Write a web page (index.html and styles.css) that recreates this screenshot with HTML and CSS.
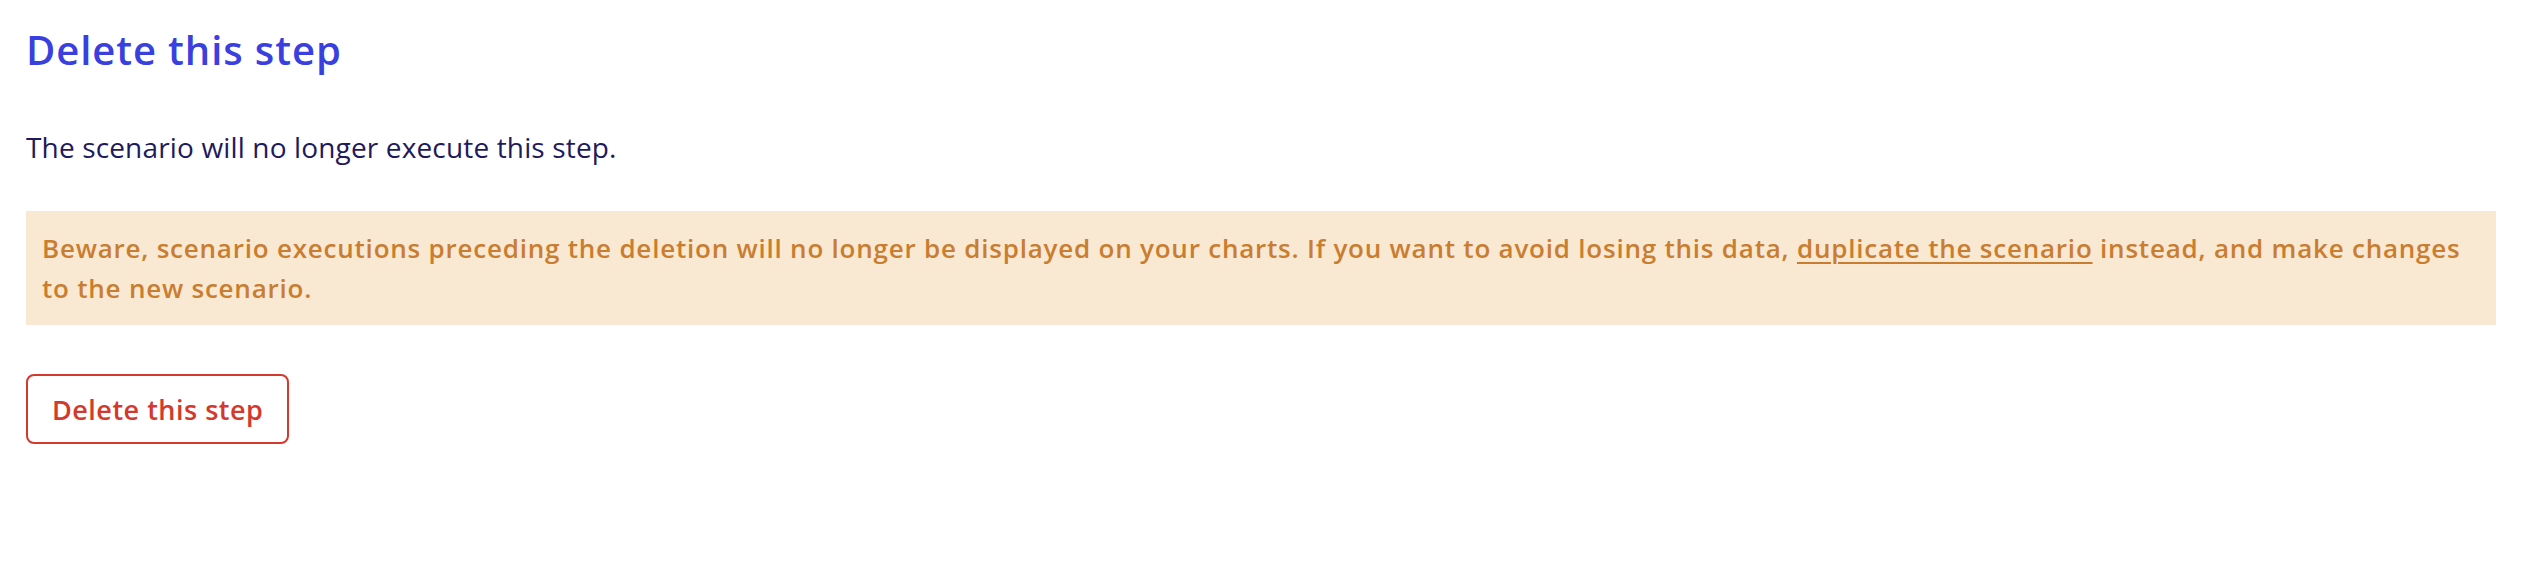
FILE: index.html
```html
<!DOCTYPE html>
<html lang="en">
<head>
    <meta charset="UTF-8">
    <title>Delete this step</title>
    <link rel="stylesheet" href="styles.css">
</head>
<body>
    <div class="panel">
        <h1 class="panel-title">Delete this step</h1>
        <p class="panel-text">The scenario will no longer execute this step.</p>
        <div class="warning">
            Beware, scenario executions preceding the deletion will no longer be displayed on your charts. If you want to avoid losing this data, <a href="#" class="warning-link">duplicate the scenario</a> instead, and make changes to the new scenario.
        </div>
        <button class="danger-but">Delete this step</button>
    </div>
</body>
</html>
```

FILE: styles.css
```css
body,div,h1,p,button{
    padding: 0;
    margin: 0;
}
body{
    background-color: #fff;
    font-family: 'Open Sans', Lato, sans-serif;
}
.panel{
    padding: 27px 28px 0 26px;
}
.panel-title{
    height: 46px;
    line-height: 46px;
    font-size: 40px;
    font-weight: 600;
    letter-spacing: 0.9px;
    color: #3a3fe0;
}
.panel-text{
    margin-top: 58px;
    line-height: 32px;
    font-size: 28px;
    letter-spacing: 0.15px;
    color: #1e1a5c;
}
.warning{
    margin-top: 48px;
    padding: 17px 16px;
    line-height: 40px;
    font-size: 26px;
    font-weight: 600;
    letter-spacing: 0.78px;
    color: #c97d30;
    background-color: #f9e8d2;
}
.warning-link{
    color: #c97d30;
    text-decoration: underline;
    text-decoration-thickness: 2px;
    text-underline-offset: 4px;
}
.danger-but{
    display: block;
    margin-top: 49px;
    height: 70px;
    padding: 0 24px;
    border: 2px solid #d3392d;
    border-radius: 8px;
    background-color: #fff;
    font-family: 'Open Sans', Lato, sans-serif;
    font-size: 27px;
    font-weight: 600;
    letter-spacing: 0.5px;
    color: #d3392d;
    cursor: pointer;
}
```
